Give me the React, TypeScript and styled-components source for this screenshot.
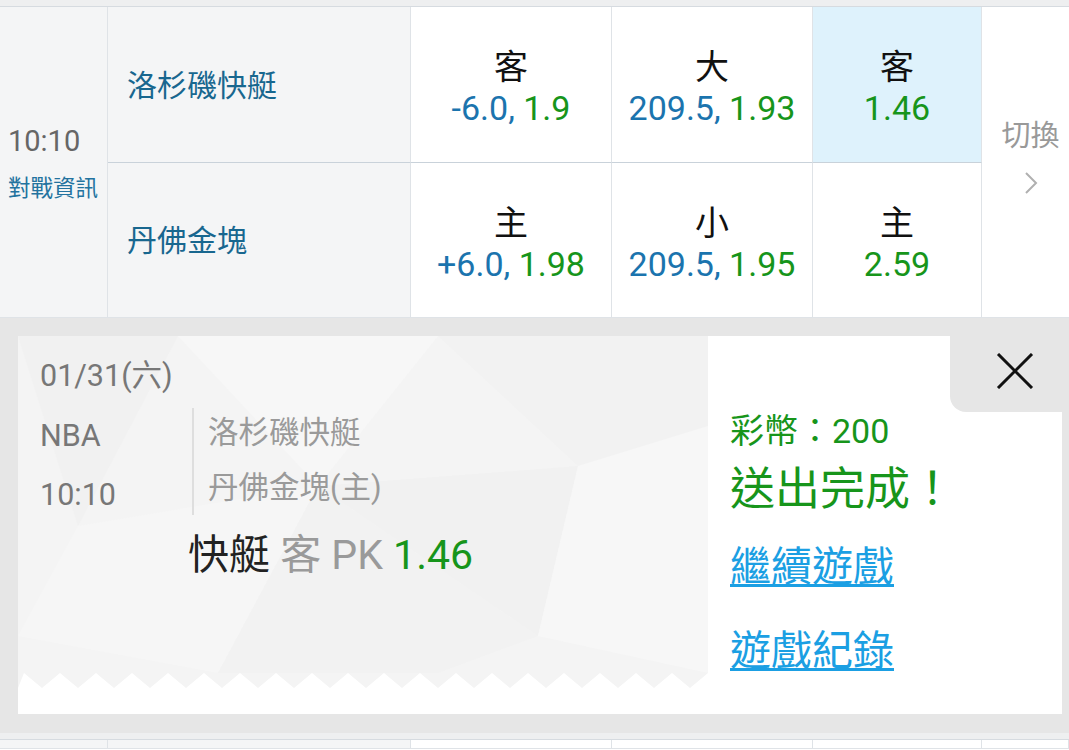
import React from 'react';
import styled, { createGlobalStyle } from 'styled-components';

const GlobalStyle = createGlobalStyle`
  * { box-sizing: border-box; }
  html, body { margin: 0; padding: 0; background: #ffffff; }
  body {
    font-family: Roboto, "Noto Sans CJK TC", sans-serif;
    overflow: hidden;
  }
`;

const colors = {
  blue: '#1b74ae',
  green: '#17951b',
  team: '#18678f',
  info: '#23739f',
  border: '#dfe3e7',
  line: '#c9d2da',
  cellGray: '#f4f5f6',
  active: '#def2fc',
  panel: '#e6e6e6',
  link: '#1b9fe3',
};

const Page = styled.div`
  width: 1069px;
  height: 750px;
  overflow: hidden;
  display: flex;
  flex-direction: column;
`;

const Strip = styled.div`
  height: 7px;
  flex: none;
  background: #eeeff0;
  border-bottom: 1px solid #d6dbe0;
`;

const MatchGrid = styled.div<{ $short?: boolean }>`
  flex: none;
  display: grid;
  grid-template-columns: 108px 303px 201px 201px 169px 1fr;
  grid-template-rows: ${(p) => (p.$short ? '9px' : '156px 155px')};
`;

const Cell = styled.div<{ $gray?: boolean; $active?: boolean; $top?: boolean }>`
  background: ${(p) => (p.$active ? colors.active : p.$gray ? colors.cellGray : '#fff')};
  border-right: 1px solid ${colors.border};
  border-bottom: 1px solid ${(p) => (p.$top ? colors.line : colors.border)};
`;

const TimeCell = styled(Cell)`
  grid-row: span 2;
  display: flex;
  flex-direction: column;
  justify-content: center;
  padding-left: 8px;
  gap: 15px;
`;

const TimeText = styled.div`
  font-size: 29px;
  line-height: 36px;
  color: #666;
`;

const InfoLink = styled.div`
  font-size: 22.5px;
  line-height: 28px;
  color: ${colors.info};
`;

const TeamCell = styled(Cell)`
  display: flex;
  align-items: center;
  padding: 0 0 4px 19px;
  font-size: 30px;
  color: ${colors.team};
`;

const OddsCell = styled(Cell)`
  display: flex;
  flex-direction: column;
  align-items: center;
  justify-content: center;
  padding-top: 6px;
  gap: 1px;
`;

const OddsLabel = styled.div`
  font-size: 34px;
  line-height: 40px;
  color: #111;
`;

const OddsValue = styled.div`
  font-size: 34px;
  line-height: 40px;
  white-space: nowrap;
`;

const Num = styled.span<{ $tone: 'blue' | 'green' }>`
  color: ${(p) => (p.$tone === 'blue' ? colors.blue : colors.green)};
`;

const SwitchCell = styled.div`
  grid-row: span 2;
  display: flex;
  flex-direction: column;
  align-items: center;
  justify-content: center;
  padding: 0 0 11px 10px;
  gap: 17px;
  border-bottom: 1px solid ${colors.border};
`;

const SwitchText = styled.div`
  font-size: 29px;
  line-height: 36px;
  color: #999;
`;

const Panel = styled.div`
  flex: none;
  background: ${colors.panel};
  padding: 18px 7px 19px 18px;
`;

const Card = styled.div`
  height: 378px;
  background: #fff;
  display: flex;
`;

const Ticket = styled.div`
  position: relative;
  width: 690px;
  flex: none;
  padding: 20px 0 0 22px;
`;

const TicketBg = styled.svg`
  position: absolute;
  left: 0;
  top: 0;
  width: 690px;
  height: 352px;
  z-index: 0;
`;

const TicketBody = styled.div`
  position: relative;
  z-index: 1;
`;

const DateLine = styled.div`
  font-size: 30.5px;
  line-height: 40px;
  color: #777;
`;

const InfoRow = styled.div`
  display: flex;
  margin-top: 12px;
  height: 107px;
`;

const LeagueCol = styled.div`
  width: 154px;
  display: flex;
  flex-direction: column;
  gap: 19px;
  padding-top: 8px;
  border-right: 2px solid #dedede;
  font-size: 30.5px;
  line-height: 40px;
  color: #777;
`;

const TeamsCol = styled.div`
  display: flex;
  flex-direction: column;
  gap: 15px;
  padding: 5px 0 0 14px;
  font-size: 30.5px;
  line-height: 40px;
  color: #9a9a9a;
`;

const PickLine = styled.div`
  margin: 15px 0 0 148px;
  font-size: 41px;
  line-height: 50px;
  white-space: nowrap;
`;

const PickPart = styled.span<{ $tone: 'dark' | 'gray' | 'green' }>`
  color: ${(p) => (p.$tone === 'dark' ? '#222' : p.$tone === 'gray' ? '#9a9a9a' : colors.green)};
`;

const Result = styled.div`
  flex: 1;
  display: flex;
  flex-direction: column;
  align-items: flex-start;
  padding-left: 22px;
`;

const CloseTab = styled.div`
  align-self: flex-end;
  width: 112px;
  height: 76px;
  background: ${colors.panel};
  border-bottom-left-radius: 16px;
  display: flex;
  align-items: center;
  justify-content: center;
  padding-left: 18px;
  padding-bottom: 6px;
`;

const Coins = styled.div`
  font-size: 34px;
  line-height: 38px;
  color: ${colors.green};
`;

const Done = styled.div`
  margin-top: 12px;
  font-size: 45px;
  line-height: 56px;
  color: ${colors.green};
`;

const ActionLink = styled.a<{ $gap: number }>`
  margin-top: ${(p) => p.$gap}px;
  font-size: 41px;
  line-height: 52px;
  color: ${colors.link};
  text-decoration: underline;
  text-decoration-thickness: 3px;
  text-underline-offset: 3px;
  cursor: pointer;
`;

const zigzag = (() => {
  const pts: string[] = ['0,0', '690,0'];
  let i = 0;
  for (let x = 690; x >= 0; x -= 18) {
    pts.push(`${x},${i % 2 === 0 ? 337 : 352}`);
    i++;
  }
  pts.push('0,352');
  return pts.join(' ');
})();

const Chevron = () => (
  <svg width="14" height="24" viewBox="0 0 14 24">
    <path d="M2 2 L12 12 L2 22" fill="none" stroke="#b0b0b0" strokeWidth="2" />
  </svg>
);

const CloseIcon = () => (
  <svg width="38" height="36" viewBox="0 0 38 36">
    <path d="M2 1 L36 35 M36 1 L2 35" stroke="#111" strokeWidth="3" />
  </svg>
);

type Odds = { label: string; line?: string; price: string; active?: boolean; top?: boolean };

const OddsBox = ({ label, line, price, active, top }: Odds) => (
  <OddsCell $active={active} $top={top}>
    <OddsLabel>{label}</OddsLabel>
    <OddsValue>
      {line && <Num $tone="blue">{line}, </Num>}
      <Num $tone="green">{price}</Num>
    </OddsValue>
  </OddsCell>
);

const topRow: Odds[] = [
  { label: '客', line: '-6.0', price: '1.9', top: true },
  { label: '大', line: '209.5', price: '1.93', top: true },
  { label: '客', price: '1.46', active: true, top: true },
];

const bottomRow: Odds[] = [
  { label: '主', line: '+6.0', price: '1.98' },
  { label: '小', line: '209.5', price: '1.95' },
  { label: '主', price: '2.59' },
];

export default function App() {
  return (
    <Page>
      <GlobalStyle />
      <Strip />
      <MatchGrid>
        <TimeCell $gray>
          <TimeText>10:10</TimeText>
          <InfoLink>對戰資訊</InfoLink>
        </TimeCell>
        <TeamCell $gray $top>洛杉磯快艇</TeamCell>
        {topRow.map((o, i) => (
          <OddsBox key={i} {...o} />
        ))}
        <SwitchCell>
          <SwitchText>切換</SwitchText>
          <Chevron />
        </SwitchCell>
        <TeamCell $gray>丹佛金塊</TeamCell>
        {bottomRow.map((o, i) => (
          <OddsBox key={i} {...o} />
        ))}
      </MatchGrid>
      <Panel>
        <Card>
          <Ticket>
            <TicketBg viewBox="0 0 690 352" preserveAspectRatio="none">
              <polygon points={zigzag} fill="#f4f4f4" />
              <polygon points="0,0 160,0 60,190" fill="#f1f1f1" />
              <polygon points="160,0 420,0 300,150" fill="#f7f7f7" />
              <polygon points="420,0 690,0 690,90 560,130" fill="#f2f2f2" />
              <polygon points="60,190 300,150 200,337 0,300" fill="#f6f6f6" />
              <polygon points="300,150 560,130 520,300" fill="#f1f1f1" />
              <polygon points="560,130 690,90 690,337 520,300" fill="#f7f7f7" />
              <polygon points="200,337 300,150 520,300 420,337" fill="#f2f2f2" />
            </TicketBg>
            <TicketBody>
              <DateLine>01/31(六)</DateLine>
              <InfoRow>
                <LeagueCol>
                  <div>NBA</div>
                  <div>10:10</div>
                </LeagueCol>
                <TeamsCol>
                  <div>洛杉磯快艇</div>
                  <div>丹佛金塊(主)</div>
                </TeamsCol>
              </InfoRow>
              <PickLine>
                <PickPart $tone="dark">快艇</PickPart>{' '}
                <PickPart $tone="gray">客 PK</PickPart>{' '}
                <PickPart $tone="green">1.46</PickPart>
              </PickLine>
            </TicketBody>
          </Ticket>
          <Result>
            <CloseTab>
              <CloseIcon />
            </CloseTab>
            <Coins>彩幣：200</Coins>
            <Done>送出完成！</Done>
            <ActionLink $gap={23}>繼續遊戲</ActionLink>
            <ActionLink $gap={32}>遊戲紀錄</ActionLink>
          </Result>
        </Card>
      </Panel>
      <Strip />
      <MatchGrid $short>
        <Cell $gray />
        <Cell $gray />
        <Cell />
        <Cell />
        <Cell />
        <Cell />
      </MatchGrid>
    </Page>
  );
}
